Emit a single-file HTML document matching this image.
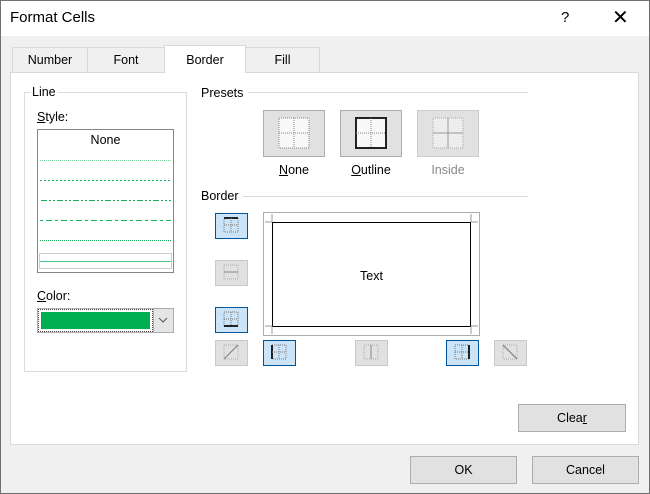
<!DOCTYPE html>
<html><head><style>
*{margin:0;padding:0;box-sizing:border-box}
body{width:650px;height:494px;overflow:hidden;font-family:"Liberation Sans",sans-serif;font-size:12px;color:#000;background:#f0f0f0;position:relative}
.a{position:absolute}
.btn{position:absolute;background:#e1e1e1;border:1px solid #adadad;text-align:center}
.sb{position:absolute;width:33px;height:26px;background:#e1e1e1;border:1px solid #c8c8c8}
.sb.on{background:#cce4f7;border-color:#005499}
.tab{position:absolute;top:47px;height:25px;background:#f0f0f0;border:1px solid #d9d9d9;border-bottom:none;text-align:center;line-height:24px;font-size:12.5px}
</style></head><body>
<div class="a" style="left:0;top:0;width:650px;height:36px;background:#fff"></div>
<div class="a" style="left:10px;top:9px;font-size:15px">Format Cells</div>
<div class="a" style="left:561px;top:9px;font-size:15px">?</div>
<div class="a" style="left:612px;top:5px;font-size:20px;font-weight:300">✕</div>
<div class="a" style="left:0;top:0;width:650px;height:494px;border:1px solid #707070;pointer-events:none"></div>

<div class="a" style="left:10px;top:72px;width:629px;height:373px;background:#fff;border:1px solid #d9d9d9"></div>
<div class="tab" style="left:12px;width:76px">Number</div>
<div class="tab" style="left:87px;width:78px">Font</div>
<div class="tab" style="left:245px;width:75px">Fill</div>
<div class="tab" style="left:164px;top:45px;height:28px;width:82px;background:#fff;line-height:28px">Border</div>

<!-- Line group -->
<div class="a" style="left:24px;top:92px;width:163px;height:280px;border:1px solid #dcdcdc"></div>
<div class="a" style="left:30px;top:85px;background:#fff;padding:0 2px;font-size:12.5px">Line</div>
<div class="a" style="left:37px;top:110px;font-size:12.5px"><u>S</u>tyle:</div>
<div class="a" style="left:37px;top:129px;width:137px;height:144px;border:1px solid #828790;background:#fff"></div>
<div class="a" style="left:37px;top:133px;width:137px;text-align:center;font-size:12.5px">None</div>
<svg class="a" style="left:37px;top:129px" width="137" height="144">
<path d="M3 31.5H134" stroke="#6fd39a" stroke-dasharray="1 1"/>
<path d="M3 51.5H134" stroke="#14ad5a" stroke-dasharray="2 2"/>
<path d="M4 71.5H134" stroke="#14ad5a" stroke-dasharray="6 2 2 2 2 2"/>
<path d="M3 91.5H134" stroke="#14ad5a" stroke-dasharray="3 3 6 3"/>
<path d="M3 111.5H134" stroke="#14ad5a" stroke-dasharray="1 1"/>
<rect x="2.5" y="124.5" width="132" height="15" fill="none" stroke="#999" stroke-dasharray="1 1"/>
<path d="M3 132.5H134" stroke="#4dc384"/>
</svg>
<div class="a" style="left:37px;top:289px;font-size:12.5px"><u>C</u>olor:</div>
<div class="a" style="left:37px;top:308px;width:137px;height:25px;border:1px solid #adadad;background:#fff"></div>
<div class="a" style="left:38px;top:309px;width:115px;height:23px;border:1px dotted #444"></div>
<div class="a" style="left:41px;top:312px;width:109px;height:17px;background:#00b050"></div>
<div class="a" style="left:153px;top:309px;width:20px;height:23px;background:#e5e5e5;border-left:1px solid #adadad"></div>
<svg class="a" style="left:158px;top:316px" width="10" height="8"><path d="M1 2L5 6L9 2" fill="none" stroke="#555"/></svg>

<!-- Presets -->
<div class="a" style="left:201px;top:86px;font-size:12.5px">Presets</div>
<div class="a" style="left:248px;top:92px;width:280px;border-top:1px solid #dcdcdc"></div>
<div class="btn" style="left:263px;top:110px;width:62px;height:47px"><svg width="60" height="45"><rect x="15" y="7" width="30" height="30" fill="#f8f8f8" stroke="#888" stroke-dasharray="1 1"/><path d="M30 7V37M15 22H45" stroke="#888" stroke-dasharray="1 1"/></svg></div>
<div class="btn" style="left:340px;top:110px;width:62px;height:47px"><svg width="60" height="45"><rect x="15" y="7" width="30" height="30" fill="#f8f8f8" stroke="#222" stroke-width="2"/><path d="M30 7V37M15 22H45" stroke="#888" stroke-dasharray="1 1"/></svg></div>
<div class="btn" style="left:417px;top:110px;width:62px;height:47px;border-color:#ccc"><svg width="60" height="45"><rect x="15" y="7" width="30" height="30" fill="#ededed" stroke="#aaa" stroke-dasharray="1 1"/><path d="M30 7V37M15 22H45" stroke="#999"/></svg></div>
<div class="a" style="left:263px;top:163px;width:62px;text-align:center;font-size:12.5px"><u>N</u>one</div>
<div class="a" style="left:340px;top:163px;width:62px;text-align:center;font-size:12.5px"><u>O</u>utline</div>
<div class="a" style="left:417px;top:163px;width:62px;text-align:center;font-size:12.5px;color:#888">Inside</div>

<!-- Border -->
<div class="a" style="left:201px;top:189px;font-size:12.5px">Border</div>
<div class="a" style="left:243px;top:196px;width:285px;border-top:1px solid #dcdcdc"></div>
<div class="a" style="left:263px;top:212px;width:217px;height:124px;border:1px solid #adadad;background:#fff"></div>
<div class="a" style="left:272px;top:222px;width:199px;height:105px;border:1px solid #000"></div>
<svg class="a" style="left:263px;top:212px" width="217" height="124"><path d="M9 2V10M2 10H9M208 2V10M208 10H215M9 114V122M2 114H9M208 114V122M208 114H215" stroke="#999"/></svg>
<div class="a" style="left:272px;top:269px;width:199px;text-align:center;font-size:12.5px">Text</div>

<div class="sb on" style="left:215px;top:213px"><svg width="31" height="24"><rect x="8" y="4" width="14" height="14" fill="none" stroke="#777" stroke-dasharray="1 1"/><path d="M8 4H22" stroke="#222" stroke-width="2"/><path d="M15 4V18M8 11H22" stroke="#777" stroke-dasharray="1 1"/></svg></div>
<div class="sb" style="left:215px;top:260px"><svg width="31" height="24"><rect x="8" y="4" width="14" height="14" fill="none" stroke="#aaa" stroke-dasharray="1 1"/><path d="M8 11H22" stroke="#888"/></svg></div>
<div class="sb on" style="left:215px;top:307px"><svg width="31" height="24"><rect x="8" y="4" width="14" height="14" fill="none" stroke="#777" stroke-dasharray="1 1"/><path d="M8 18H22" stroke="#222" stroke-width="2"/><path d="M15 4V18M8 11H22" stroke="#777" stroke-dasharray="1 1"/></svg></div>
<div class="sb" style="left:215px;top:340px"><svg width="31" height="24"><rect x="8" y="4" width="14" height="14" fill="none" stroke="#aaa" stroke-dasharray="1 1"/><path d="M8 18L22 4" stroke="#777"/></svg></div>
<div class="sb on" style="left:263px;top:340px"><svg width="31" height="24"><rect x="8" y="4" width="14" height="14" fill="none" stroke="#777" stroke-dasharray="1 1"/><path d="M8 4V18" stroke="#222" stroke-width="2"/><path d="M15 4V18M8 11H22" stroke="#777" stroke-dasharray="1 1"/></svg></div>
<div class="sb" style="left:355px;top:340px"><svg width="31" height="24"><rect x="8" y="4" width="14" height="14" fill="none" stroke="#aaa" stroke-dasharray="1 1"/><path d="M15 4V18" stroke="#888"/></svg></div>
<div class="sb on" style="left:446px;top:340px"><svg width="31" height="24"><rect x="8" y="4" width="14" height="14" fill="none" stroke="#777" stroke-dasharray="1 1"/><path d="M22 4V18" stroke="#222" stroke-width="2"/><path d="M15 4V18M8 11H22" stroke="#777" stroke-dasharray="1 1"/></svg></div>
<div class="sb" style="left:494px;top:340px"><svg width="31" height="24"><rect x="8" y="4" width="14" height="14" fill="none" stroke="#aaa" stroke-dasharray="1 1"/><path d="M8 4L22 18" stroke="#777"/></svg></div>

<div class="btn" style="left:518px;top:404px;width:108px;height:28px;line-height:26px;font-size:12.5px">Clea<u>r</u></div>
<div class="btn" style="left:410px;top:456px;width:107px;height:28px;line-height:26px;font-size:12.5px">OK</div>
<div class="btn" style="left:532px;top:456px;width:107px;height:28px;line-height:26px;font-size:12.5px">Cancel</div>
</body></html>
